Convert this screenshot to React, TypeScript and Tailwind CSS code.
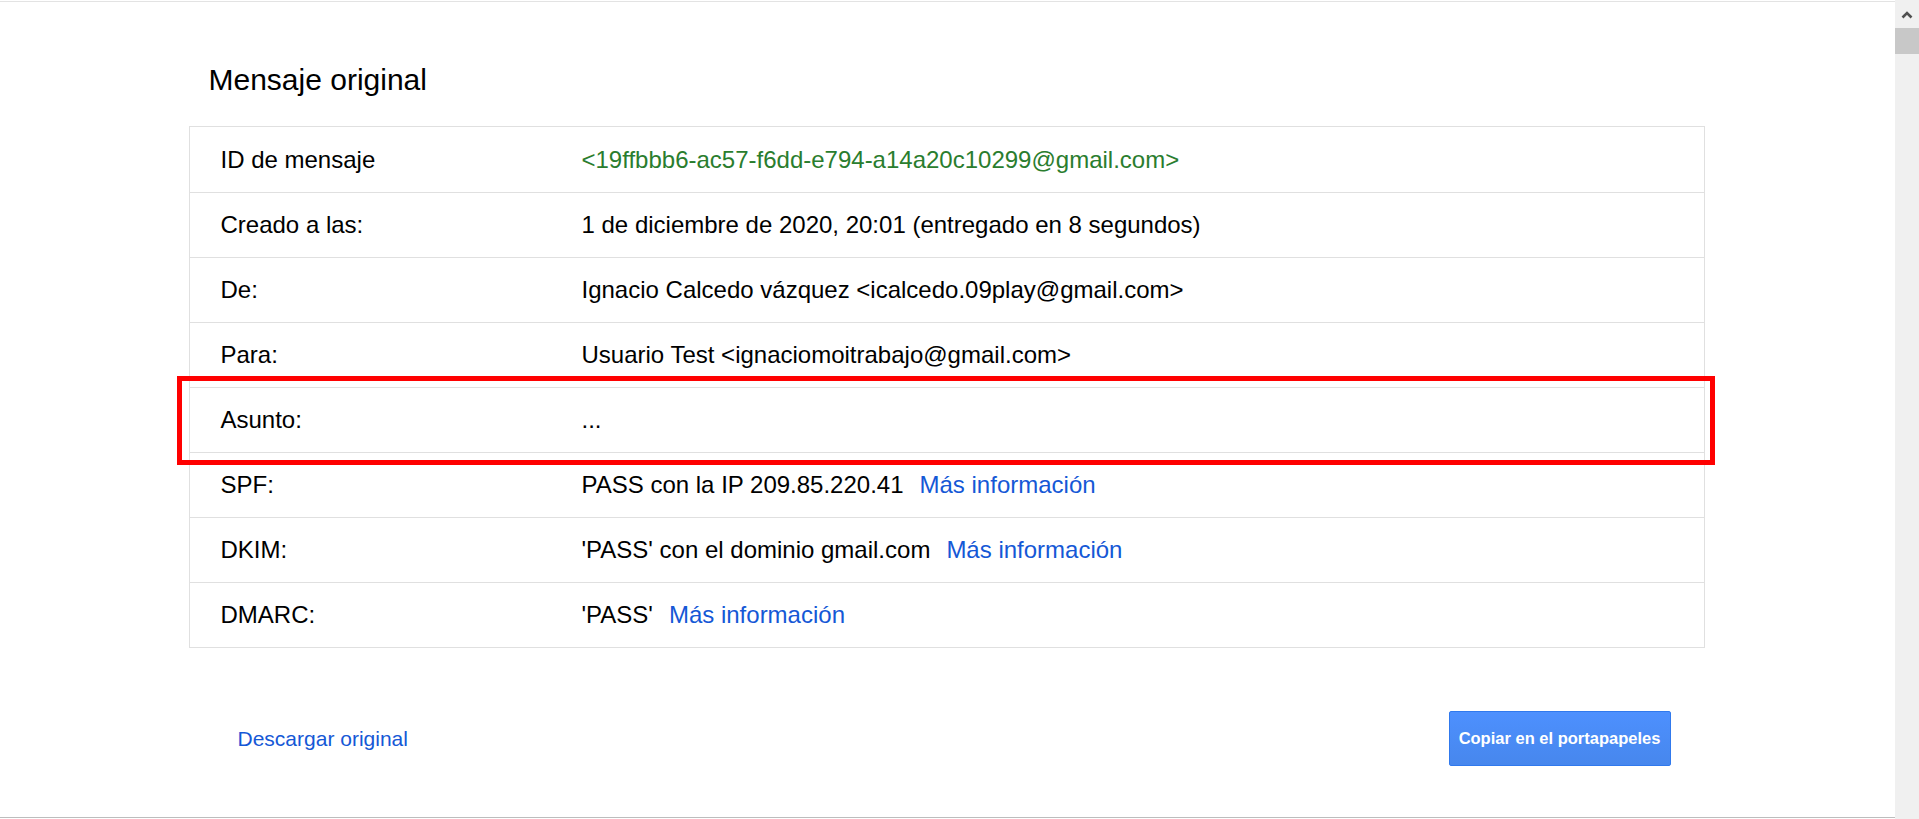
import type { ReactNode } from "react";

type Row = {
  label: string;
  value: ReactNode;
  link?: boolean;
  highlight?: boolean;
};

const rows: Row[] = [
  {
    label: "ID de mensaje",
    value: (
      <span className="text-[#2a7d2e]">
        &lt;19ffbbb6-ac57-f6dd-e794-a14a20c10299@gmail.com&gt;
      </span>
    ),
  },
  {
    label: "Creado a las:",
    value: "1 de diciembre de 2020, 20:01 (entregado en 8 segundos)",
  },
  { label: "De:", value: "Ignacio Calcedo vázquez <icalcedo.09play@gmail.com>" },
  { label: "Para:", value: "Usuario Test <ignaciomoitrabajo@gmail.com>" },
  { label: "Asunto:", value: "...", highlight: true },
  { label: "SPF:", value: "PASS con la IP 209.85.220.41", link: true },
  { label: "DKIM:", value: "'PASS' con el dominio gmail.com", link: true },
  { label: "DMARC:", value: "'PASS'", link: true },
];

function Scrollbar() {
  return (
    <div className="flex h-full w-[24px] shrink-0 flex-col bg-[#f0f0f0]">
      <div className="flex h-[28px] items-center justify-center">
        <svg width="12" height="8" viewBox="0 0 12 8" className="mt-[2px]">
          <polyline
            points="1.5,6.5 6,2 10.5,6.5"
            fill="none"
            stroke="#505050"
            strokeWidth="2.6"
          />
        </svg>
      </div>
      <div className="h-[26px] bg-[#c8c8c8]" />
    </div>
  );
}

export default function App() {
  return (
    <div
      className="flex h-[819px] w-full overflow-hidden bg-white text-black"
      style={{ fontFamily: '"Liberation Sans", Arial, sans-serif' }}
    >
      <div className="mt-px flex h-[817px] flex-1 flex-col border-t border-b border-t-[#e3e3e3] border-b-[#bdbdbd]">
        <div className="mx-auto w-[1516px] -translate-x-px pt-[61px]">
          <h1 className="pl-[20px] text-[30px] leading-[34px] font-normal">
            Mensaje original
          </h1>

          <div className="mt-[29px] border border-[#e0e0e0]">
            {rows.map((row, i) => (
              <div
                key={row.label}
                className={
                  "relative grid h-[65px] grid-cols-[392px_1fr] items-center text-[24px] " +
                  (i === 0 ? "h-[64px]" : "border-t border-[#e0e0e0]")
                }
              >
                <div className="pl-[31px]">{row.label}</div>
                <div className="whitespace-nowrap">
                  {row.value}
                  {row.link && (
                    <a className="ml-[16px] text-[#1558d6]" href="#">
                      Más información
                    </a>
                  )}
                </div>
                {row.highlight && (
                  <div className="pointer-events-none absolute -top-[12px] -right-[11px] -bottom-[13px] -left-[13px] border-[5px] border-[#ff0000]" />
                )}
              </div>
            ))}
          </div>

          <div className="mt-[63px] flex items-center justify-between pr-[34px] pl-[49px]">
            <a href="#" className="text-[21px] text-[#1558d6]">
              Descargar original
            </a>
            <button
              type="button"
              className="h-[55px] w-[222px] rounded-[2px] border border-[#3079ed] bg-gradient-to-b from-[#4d90fe] to-[#4787ed] text-[16.5px] font-bold text-white"
            >
              Copiar en el portapapeles
            </button>
          </div>
        </div>
      </div>
      <Scrollbar />
    </div>
  );
}
